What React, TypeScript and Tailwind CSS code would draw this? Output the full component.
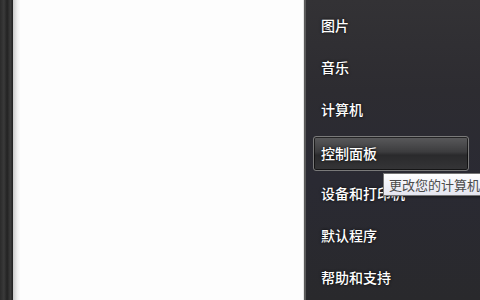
import React from "react";

const items = ["图片", "音乐", "计算机", "控制面板", "设备和打印机", "默认程序", "帮助和支持"];

export default function App() {
  return (
    <div
      className="relative flex h-[300px] w-[480px] overflow-hidden bg-white"
      style={{ fontFamily: '"Noto Sans CJK SC", "Noto Sans", sans-serif' }}
    >
      {/* left dark strip */}
      <div className="h-full w-[13px] bg-[linear-gradient(90deg,#2a2a2a_0%,#3a3a3a_30%,#222_55%,#3b3b3b_80%,#1e1e1e_100%)]" />
      <div className="h-full w-[7px] bg-[linear-gradient(90deg,#c8c8c8,#eeeeee_60%,#fafafa)]" />
      {/* white panel */}
      <div className="h-full flex-1 bg-[#fdfdfd]" />
      <div className="h-full w-[1px] bg-[#e6e6e6]" />
      <div className="h-full w-[2px] bg-[#5a5a5a]" />
      {/* dark right panel */}
      <div className="flex h-full w-[174px] flex-col bg-[linear-gradient(180deg,#333235_0%,#2d2c31_30%,#2a2a33_60%,#29292c_100%)] pt-[4px]">
        {items.map((t, i) => (
          <div key={t} className="flex h-[42px] items-center">
            {i === 3 ? (
              <div className="ml-[7px] mr-[11px] mt-[4px] flex h-[35px] flex-1 items-center rounded-[3px] border border-[#7a7a7a] bg-[linear-gradient(180deg,#5a5a5c_0%,#3c3c3e_45%,#2a2a2c_55%,#353537_100%)] pl-[7px] shadow-[inset_0_0_0_1px_rgba(0,0,0,0.6)]">
                <span className="text-[14px] font-medium leading-none text-white [text-shadow:0_0_3px_rgba(0,0,0,0.9)]">{t}</span>
              </div>
            ) : (
              <span className="pl-[15px] text-[14px] font-medium leading-none text-white [text-shadow:0_0_3px_rgba(0,0,0,0.9)]">{t}</span>
            )}
          </div>
        ))}
      </div>
      {/* tooltip */}
      <div className="absolute left-[383px] top-[173px] flex h-[23px] w-[120px] items-center border border-[#767676] bg-[linear-gradient(180deg,#ffffff,#e4e5f0)] pl-[5px] shadow-[1px_1px_2px_rgba(0,0,0,0.4)]">
        <span className="whitespace-nowrap text-[13px] leading-none text-[#4c4c4c]">更改您的计算机设置</span>
      </div>
    </div>
  );
}
